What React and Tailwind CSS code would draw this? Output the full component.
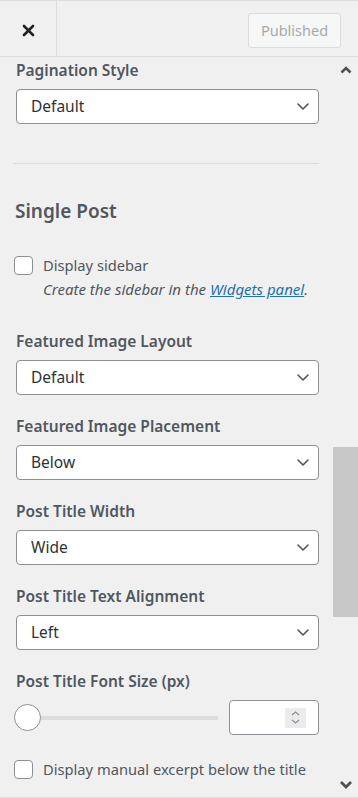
import React from "react";

const font = { fontFamily: '"Noto Sans", "Open Sans", sans-serif' };

function Chevron() {
  return (
    <svg width="12" height="7" viewBox="0 0 12 7" className="shrink-0">
      <polyline points="1,1 6,6 11,1" fill="none" stroke="#50575e" strokeWidth="1.6" strokeLinecap="round" strokeLinejoin="round" />
    </svg>
  );
}

function Select({ value }) {
  return (
    <div className="flex h-[35px] items-center justify-between rounded-[4px] border border-[#8c8f94] bg-white pl-[14px] pr-[9px] text-[15.5px] text-[#2c3338]">
      <span>{value}</span>
      <Chevron />
    </div>
  );
}

function Field({ label, value }) {
  return (
    <div className="mb-[19px]">
      <div className="mb-[7px] h-[24px] text-[15.5px] font-semibold leading-[24px] text-[#50575e]">{label}</div>
      <Select value={value} />
    </div>
  );
}

function Checkbox() {
  return <div className="h-[19px] w-[19px] shrink-0 rounded-[4px] border border-[#8c8f94] bg-white" />;
}

export default function App() {
  return (
    <div style={font} className="flex h-[798px] w-[358px] flex-col overflow-hidden border-t border-[#dcdcde] bg-[#f0f0f1]">
      <header className="flex h-[56px] shrink-0 items-center border-b border-[#dcdcde]">
        <div className="flex h-full w-[57px] items-center justify-center border-r border-[#dcdcde] pt-[3px]">
          <svg width="13" height="13" viewBox="0 0 13 13">
            <path d="M2 2 L11 11 M11 2 L2 11" stroke="#1d2327" strokeWidth="2.6" strokeLinecap="round" />
          </svg>
        </div>
        <div className="flex flex-1 justify-end pr-[17px] pt-[4px]">
          <div className="flex h-[35px] w-[93px] items-center justify-center rounded-[3px] border border-[#dcdcde] bg-[#f6f7f7] text-[14.5px] text-[#a7aaad]">
            Published
          </div>
        </div>
      </header>
      <div className="flex min-h-0 flex-1 border-b border-[#dcdcde]">
        <div className="min-w-0 flex-1 pl-[16px] pr-[14px] pt-[1px]">
          <div className="mb-[7px] h-[24px] text-[15.5px] font-semibold leading-[24px] text-[#50575e]">Pagination Style</div>
          <Select value="Default" />
          <div className="mt-[39px] h-px -ml-[3px] bg-[#dcdcde]" />
          <div className="mt-[33px] h-[28px] -ml-[1px] text-[19px] font-semibold leading-[28px] text-[#50575e]">Single Post</div>
          <div className="-ml-[2px] mt-[28px] flex items-center gap-[10px] h-[24px]">
            <Checkbox />
            <span className="text-[14.7px] text-[#50575e]">Display sidebar</span>
          </div>
          <div className="ml-[27px] h-[24px] text-[15px] italic leading-[24px] text-[#50575e]">
            Create the sidebar in the <span className="text-[#2271b1] underline">Widgets panel</span>.
          </div>
          <div className="mt-[28px]">
            <Field label="Featured Image Layout" value="Default" />
            <Field label="Featured Image Placement" value="Below" />
            <Field label="Post Title Width" value="Wide" />
            <Field label="Post Title Text Alignment" value="Left" />
          </div>
          <div className="h-[24px] text-[15.5px] font-semibold leading-[24px] text-[#50575e]">Post Title Font Size (px)</div>
          <div className="mt-[7px] flex h-[35px] items-center">
            <div className="-ml-[2px] flex flex-1 items-center">
              <div className="h-[27px] w-[27px] shrink-0 rounded-full border border-[#8c8f94] bg-white" />
              <div className="h-[4px] w-[177px] bg-[#dcdcde]" />
            </div>
            <div className="flex h-[35px] w-[90px] items-center justify-end rounded-[4px] border border-[#8c8f94] bg-white pr-[12px]">
              <div className="flex h-[20px] w-[21px] flex-col items-center justify-center gap-[3px] bg-[#ebebeb]">
                <svg width="9" height="5" viewBox="0 0 9 5"><polyline points="1,4 4.5,1 8,4" fill="none" stroke="#8c8f94" strokeWidth="1.2" /></svg>
                <svg width="9" height="5" viewBox="0 0 9 5"><polyline points="1,1 4.5,4 8,1" fill="none" stroke="#8c8f94" strokeWidth="1.2" /></svg>
              </div>
            </div>
          </div>
          <div className="-ml-[2px] mt-[22px] flex h-[24px] items-center gap-[10px]">
            <Checkbox />
            <span className="text-[14.7px] text-[#50575e]">Display manual excerpt below the title</span>
          </div>
        </div>
        <div className="flex w-[25px] shrink-0 flex-col">
          <div className="flex h-[26px] items-center justify-center">
            <svg width="12" height="8" viewBox="0 0 12 8"><polyline points="1.5,6.5 6,2 10.5,6.5" fill="none" stroke="#505050" strokeWidth="2.6" /></svg>
          </div>
          <div className="flex-1">
            <div className="mt-[364px] h-[170px] bg-[#c8c8c8]" />
          </div>
          <div className="flex h-[26px] items-center justify-center">
            <svg width="14" height="9" viewBox="0 0 14 9"><polyline points="2,2 7,7 12,2" fill="none" stroke="#505050" strokeWidth="2.8" /></svg>
          </div>
        </div>
      </div>
    </div>
  );
}
